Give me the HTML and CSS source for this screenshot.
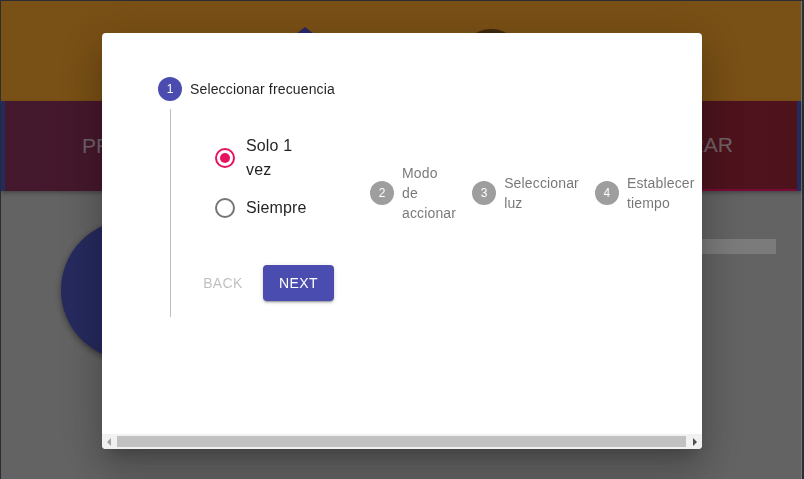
FILE: index.html
```html
<!DOCTYPE html>
<html lang="es">
<head>
<meta charset="utf-8">
<title>Stepper</title>
<link rel="stylesheet" href="styles.css">
</head>
<body>
<div class="app">
  <header class="topbar">
    <span class="logo-tri"></span>
    <span class="logo-dot"></span>
  </header>
  <nav class="tabs">
    <div class="tab tab-left">PRINCIPAL</div>
    <div class="tab tab-right">CONFIGURAR</div>
  </nav>
  <main class="main">
    <div class="dial"></div>
    <div class="track"></div>
  </main>
</div>

<div class="backdrop">
  <div class="dialog">
    <div class="dialog-body">
      <div class="stepper">
        <div class="step-head">
          <span class="step-icon step-icon-active">1</span>
          <span class="step-title">Seleccionar frecuencia</span>
        </div>
        <div class="step-content">
          <div class="step-row">
            <div class="radio-group">
              <label class="radio-item">
                <span class="radio radio-checked"></span>
                <span class="radio-label">Solo 1 vez</span>
              </label>
              <label class="radio-item">
                <span class="radio"></span>
                <span class="radio-label">Siempre</span>
              </label>
            </div>
            <div class="hsteps">
              <div class="hstep">
                <span class="step-icon">2</span>
                <span class="hstep-label">Modo de accionar</span>
              </div>
              <div class="hstep">
                <span class="step-icon">3</span>
                <span class="hstep-label">Seleccionar luz</span>
              </div>
              <div class="hstep">
                <span class="step-icon">4</span>
                <span class="hstep-label">Establecer tiempo</span>
              </div>
            </div>
          </div>
          <div class="actions">
            <button class="btn btn-back" type="button">Back</button>
            <button class="btn btn-next" type="button">Next</button>
          </div>
        </div>
      </div>
    </div>
    <div class="hscroll">
      <span class="hscroll-btn"><span class="arrow arrow-left"></span></span>
      <span class="hscroll-thumb"></span>
      <span class="hscroll-btn"><span class="arrow arrow-right"></span></span>
    </div>
  </div>
</div>
</body>
</html>
```
FILE: styles.css
```css
* { box-sizing: border-box; }

html, body {
  margin: 0;
  padding: 0;
  height: 100%;
}

body {
  background: #575e6b;
  font-family: "Liberation Sans", Arial, sans-serif;
  overflow: hidden;
}

.app {
  margin: 1px 0 0 1px;
  width: 801px;
  height: calc(100vh - 1px);
  border-right: 1px solid #f2f2f2;
  background: #c6c6c6;
  display: flex;
  flex-direction: column;
}

/* top orange bar */
.topbar {
  height: 100px;
  flex: none;
  background: #f3a02b;
  display: flex;
  align-items: flex-start;
  padding: 26px 0 0 265px;
}

.logo-tri {
  width: 0;
  height: 0;
  border-left: 39px solid transparent;
  border-right: 39px solid transparent;
  border-bottom: 30px solid #4f52cc;
}

.logo-dot {
  width: 64px;
  height: 64px;
  margin: 2px 0 0 115px;
  border-radius: 50%;
  background: #7a5318;
}

/* tabs band */
.tabs {
  height: 90px;
  flex: none;
  display: flex;
  border-left: 4px solid #4a54bc;
  border-right: 4px solid #4a54bc;
  background: linear-gradient(90deg, #88305b, #9d2537);
  box-shadow: 0 2px 4px rgba(0, 0, 0, 0.3);
  position: relative;
  z-index: 1;
}

.tab {
  flex: 1;
  display: flex;
  align-items: center;
  font-size: 21px;
  color: rgba(255, 255, 255, 0.72);
}

.tab-left {
  padding-left: 77px;
}

.tab-right {
  justify-content: flex-end;
  padding-right: 64px;
  border-bottom: 2px solid #f5136a;
}

/* main content */
.main {
  flex: 1;
  display: flex;
  align-items: flex-start;
}

.dial {
  flex: none;
  width: 140px;
  height: 140px;
  margin: 29px 0 0 60px;
  border-radius: 50%;
  background: #4c54bc;
  box-shadow: 0 2px 6px rgba(0, 0, 0, 0.45);
}

.track {
  flex: 1;
  height: 15px;
  margin: 48px 25px 0 260px;
  background: #f6f6f6;
}

/* backdrop + dialog */
.backdrop {
  position: fixed;
  inset: 0;
  background: rgba(0, 0, 0, 0.5);
  display: flex;
  justify-content: center;
  align-items: flex-start;
  padding-top: 33px;
  z-index: 10;
}

.dialog {
  width: 600px;
  height: 416px;
  background: #fff;
  border-radius: 4px;
  overflow: hidden;
  display: flex;
  flex-direction: column;
  box-shadow: 0 11px 15px -7px rgba(0, 0, 0, 0.2),
              0 24px 38px 3px rgba(0, 0, 0, 0.14),
              0 9px 46px 8px rgba(0, 0, 0, 0.12);
}

.dialog-body {
  flex: 1;
  overflow: hidden;
}

/* drawn horizontal scrollbar */
.hscroll {
  flex: none;
  height: 15px;
  background: #f1f1f1;
  display: flex;
  align-items: center;
}

.hscroll-btn {
  flex: none;
  width: 15px;
  height: 15px;
  display: flex;
  align-items: center;
  justify-content: center;
}

.hscroll-thumb {
  flex: 1;
  height: 11px;
  margin-right: 1px;
  background: #c1c1c1;
}

.arrow {
  width: 0;
  height: 0;
  border-top: 4px solid transparent;
  border-bottom: 4px solid transparent;
}

.arrow-left {
  border-right: 4px solid #a3a3a3;
  margin-right: 1px;
}

.arrow-right {
  border-left: 4px solid #505050;
  margin-left: 1px;
}

.stepper {
  width: max-content;
  padding: 36px 0 0 56px;
}

.step-head {
  display: flex;
  align-items: center;
  padding: 8px 0;
}

.step-icon {
  flex: none;
  width: 24px;
  height: 24px;
  border-radius: 50%;
  background: #9e9e9e;
  color: #fff;
  font-size: 12px;
  line-height: 24px;
  text-align: center;
}

.step-icon-active {
  background: #4a4cb0;
}

.step-title {
  margin-left: 8px;
  font-size: 14px;
  line-height: 20px;
  letter-spacing: 0.15px;
  color: rgba(0, 0, 0, 0.87);
}

.step-content {
  margin-left: 12px;
  border-left: 1px solid #bdbdbd;
  padding: 0 0 16px 20px;
}

.step-row {
  display: flex;
  align-items: flex-start;
}

.radio-group {
  display: flex;
  flex-direction: column;
  gap: 5px;
  margin: 25px 0 0 24px;
}

.radio-item {
  display: flex;
  align-items: center;
  min-height: 42px;
}

.radio {
  flex: none;
  width: 20px;
  height: 20px;
  border: 2px solid #757575;
  border-radius: 50%;
  display: flex;
  align-items: center;
  justify-content: center;
}

.radio-checked {
  border-color: #e8135f;
}

.radio-checked::after {
  content: "";
  width: 10px;
  height: 10px;
  border-radius: 50%;
  background: #e8135f;
}

.radio-label {
  width: 62px;
  margin-left: 11px;
  font-size: 16px;
  line-height: 24px;
  letter-spacing: 0.15px;
  color: rgba(0, 0, 0, 0.87);
}

.hsteps {
  display: flex;
  margin: 54px 0 0 54px;
}

.hstep {
  display: flex;
  align-items: center;
  padding: 0 8px;
}

.hstep-label {
  width: min-content;
  margin-left: 8px;
  font-size: 14px;
  line-height: 20px;
  letter-spacing: 0.15px;
  color: rgba(0, 0, 0, 0.54);
}

.actions {
  display: flex;
  margin-top: 36px;
}

.btn {
  font-family: "Liberation Sans", Arial, sans-serif;
  font-size: 14px;
  font-weight: 400;
  letter-spacing: 0.4px;
  text-transform: uppercase;
  height: 36px;
  min-width: 64px;
  border: 0;
  border-radius: 4px;
  background: transparent;
}

.btn-back {
  padding: 6px 8px;
  color: rgba(0, 0, 0, 0.26);
}

.btn-next {
  margin-left: 8px;
  padding: 6px 16px;
  background: #4a4cb0;
  color: #fff;
  box-shadow: 0 3px 1px -2px rgba(0, 0, 0, 0.2),
              0 2px 2px 0 rgba(0, 0, 0, 0.14),
              0 1px 5px 0 rgba(0, 0, 0, 0.12);
}
```
